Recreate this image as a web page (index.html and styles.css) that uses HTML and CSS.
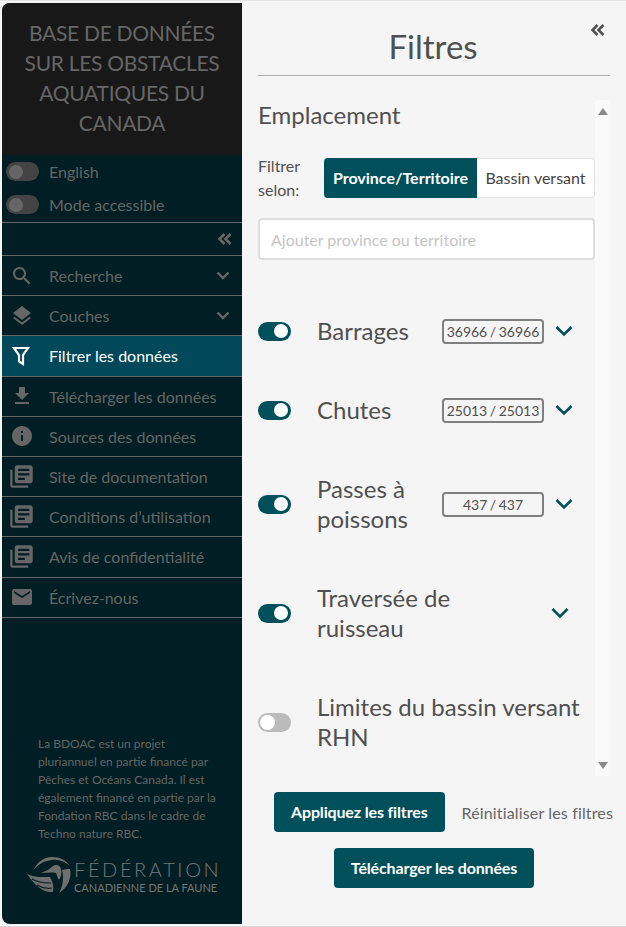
FILE: index.html
```html
<!DOCTYPE html>
<html lang="fr">
<head>
  <meta charset="UTF-8" />
  <meta name="viewport" content="width=device-width, initial-scale=1.0"/>
  <title>Base de données sur les obstacles aquatiques du Canada</title>
  <link rel="stylesheet" href="styles.css">
</head>
<body>
  <aside class="sidebar">
    <h1 class="site-title">Base de données sur les obstacles aquatiques du Canada</h1>

    <div class="switches">
      <div class="switch-row"><span class="toggle toggle-dark"></span>English</div>
      <div class="switch-row"><span class="toggle toggle-dark"></span>Mode accessible</div>
    </div>

    <div class="collapse-row">
      <svg class="double-chevron" viewBox="0 0 14 12"><path d="M6.500 1 1.500 6l5 5M12.500 1l-5 5 5 5"/></svg>
    </div>

    <nav class="nav">
      <a class="nav-item">
        <svg class="nav-icon" viewBox="0 0 24 24"><path d="M15.5 14h-.79l-.28-.27C15.41 12.59 16 11.11 16 9.5 16 5.91 13.09 3 9.5 3S3 5.91 3 9.5 5.91 16 9.5 16c1.61 0 3.09-.59 4.23-1.57l.27.28v.79l5 4.99L20.49 19l-4.99-5zm-6 0C7.01 14 5 11.99 5 9.5S7.01 5 9.5 5 14 7.01 14 9.5 11.99 14 9.5 14z"/></svg>
        <span class="nav-label">Recherche</span>
        <svg class="nav-chevron" viewBox="0 0 14 9"><path d="M1.500 1.500 7 7l5.500-5.500"/></svg>
      </a>
      <a class="nav-item">
        <svg class="nav-icon" viewBox="0 0 24 24"><path d="M11.990 18.540l-7.370-5.730L3 14.070l9 7 9-7-1.630-1.270-7.380 5.740zM12 16l7.360-5.730L21 9l-9-7-9 7 1.630 1.270L12 16z"/></svg>
        <span class="nav-label">Couches</span>
        <svg class="nav-chevron" viewBox="0 0 14 9"><path d="M1.500 1.500 7 7l5.500-5.500"/></svg>
      </a>
      <a class="nav-item nav-item-active">
        <svg class="nav-icon nav-icon-filter" viewBox="0 0 24 24"><path d="M4 4h14l-5 7v9l-4-2.500V11z"/></svg>
        <span class="nav-label">Filtrer les données</span>
      </a>
      <a class="nav-item">
        <svg class="nav-icon" viewBox="0 0 24 24"><path d="M19 9h-4V3H9v6H5l7 7 7-7zM5 18v2h14v-2H5z"/></svg>
        <span class="nav-label">Télécharger les données</span>
      </a>
      <a class="nav-item">
        <svg class="nav-icon" viewBox="0 0 24 24"><path d="M12 2C6.480 2 2 6.480 2 12s4.480 10 10 10 10-4.480 10-10S17.520 2 12 2zm1 15h-2v-6h2v6zm0-8h-2V7h2v2z"/></svg>
        <span class="nav-label">Sources des données</span>
      </a>
      <a class="nav-item">
        <svg class="nav-icon nav-icon-book" viewBox="0 0 24 24"><path d="M4 6H2v14c0 1.100.9 2 2 2h14v-2H4V6zm16-4H8c-1.100 0-2 .9-2 2v12c0 1.100.9 2 2 2h12c1.100 0 2-.9 2-2V4c0-1.100-.9-2-2-2zm-1 9H9V9h10v2zm-4 4H9v-2h6v2zm4-8H9V5h10v2z"/></svg>
        <span class="nav-label">Site de documentation</span>
      </a>
      <a class="nav-item">
        <svg class="nav-icon nav-icon-book" viewBox="0 0 24 24"><path d="M4 6H2v14c0 1.100.9 2 2 2h14v-2H4V6zm16-4H8c-1.100 0-2 .9-2 2v12c0 1.100.9 2 2 2h12c1.100 0 2-.9 2-2V4c0-1.100-.9-2-2-2zm-1 9H9V9h10v2zm-4 4H9v-2h6v2zm4-8H9V5h10v2z"/></svg>
        <span class="nav-label">Conditions d’utilisation</span>
      </a>
      <a class="nav-item">
        <svg class="nav-icon nav-icon-book" viewBox="0 0 24 24"><path d="M4 6H2v14c0 1.100.9 2 2 2h14v-2H4V6zm16-4H8c-1.100 0-2 .9-2 2v12c0 1.100.9 2 2 2h12c1.100 0 2-.9 2-2V4c0-1.100-.9-2-2-2zm-1 9H9V9h10v2zm-4 4H9v-2h6v2zm4-8H9V5h10v2z"/></svg>
        <span class="nav-label">Avis de confidentialité</span>
      </a>
      <a class="nav-item">
        <svg class="nav-icon" viewBox="0 0 24 24"><path d="M20 4H4c-1.100 0-1.990.9-1.990 2L2 18c0 1.100.9 2 2 2h16c1.100 0 2-.9 2-2V6c0-1.100-.9-2-2-2zm0 4l-8 5-8-5V6l8 5 8-5v2z"/></svg>
        <span class="nav-label">Écrivez-nous</span>
      </a>
    </nav>

    <div class="sidebar-footer">
      <p class="credits">La BDOAC est un projet pluriannuel en partie financé par Pêches et Océans Canada. Il est également financé en partie par la Fondation RBC dans le cadre de Techno nature RBC.</p>
      <div class="logo">
        <svg class="logo-mark" viewBox="0 0 47 38">
          <path d="M7 14C11 5 18 0 26 0c8 0 14 3 18 9-6-5-12-7-18-6C17 4 11 8 7 14z"/>
          <path d="M15 16c5-2 9-4 12-7 3-2 7-1 8 3 1 4 0 8-2 11-2-3-2-5-3-7-5-1-10 0-15 0z"/>
          <path d="M36 13c3-1 5-1 8-1 2 8-2 19-11 24 4-7 5-15 3-23z"/>
          <path d="M1 17c8 4 16 3 23 3 3 5 4 10 3 15C18 36 10 30 1 17z"/>
          <path class="logo-cut" d="M6 22c6 4 13 4 19 4M11 28c5 3 10 4 15 3"/>
        </svg>
        <div class="logo-text">
          <div class="logo-name">FÉDÉRATION</div>
          <div class="logo-sub">CANADIENNE DE LA FAUNE</div>
        </div>
      </div>
    </div>
  </aside>

  <main class="panel">
    <header class="panel-head">
      <h2 class="panel-title">Filtres</h2>
      <svg class="double-chevron panel-close" viewBox="0 0 14 12"><path d="M6.500 1 1.500 6l5 5M12.500 1l-5 5 5 5"/></svg>
    </header>

    <div class="scroll-area">
      <div class="scroll-content">
        <h3 class="section-title">Emplacement</h3>
        <div class="filter-by">
          <span class="filter-by-label">Filtrer selon:</span>
          <div class="btn-group">
            <button class="seg seg-on">Province/Territoire</button>
            <button class="seg">Bassin versant</button>
          </div>
        </div>
        <input class="search-input" type="text" placeholder="Ajouter province ou territoire" />

        <div class="layers">
          <div class="layer">
            <span class="toggle toggle-on"></span>
            <span class="layer-name">Barrages</span>
            <span class="count">36966 / 36966</span>
            <svg class="layer-chevron" viewBox="0 0 18 12"><path d="M1.500 2 9 9.500 16.500 2"/></svg>
          </div>
          <div class="layer">
            <span class="toggle toggle-on"></span>
            <span class="layer-name">Chutes</span>
            <span class="count">25013 / 25013</span>
            <svg class="layer-chevron" viewBox="0 0 18 12"><path d="M1.500 2 9 9.500 16.500 2"/></svg>
          </div>
          <div class="layer">
            <span class="toggle toggle-on"></span>
            <span class="layer-name">Passes à poissons</span>
            <span class="count">437 / 437</span>
            <svg class="layer-chevron" viewBox="0 0 18 12"><path d="M1.500 2 9 9.500 16.500 2"/></svg>
          </div>
          <div class="layer layer-wide">
            <span class="toggle toggle-on"></span>
            <span class="layer-name">Traversée de ruisseau</span>
            <svg class="layer-chevron" viewBox="0 0 18 12"><path d="M1.500 2 9 9.500 16.500 2"/></svg>
          </div>
          <div class="layer layer-full">
            <span class="toggle toggle-off"></span>
            <span class="layer-name">Limites du bassin versant RHN</span>
          </div>
        </div>
      </div>
      <div class="scrollbar">
        <span class="arrow-up"></span>
        <span class="arrow-down"></span>
      </div>
    </div>

    <div class="actions">
      <div class="actions-row">
        <button class="btn">Appliquez les filtres</button>
        <a class="reset-link">Réinitialiser les filtres</a>
      </div>
      <button class="btn btn-download">Télécharger les données</button>
    </div>
  </main>
</body>
</html>
```

FILE: styles.css
```css
* {
  margin: 0;
  padding: 0;
  box-sizing: border-box;
}

body {
  width: 626px;
  height: 927px;
  overflow: hidden;
  display: flex;
  padding: 2px 0 2px 2px;
  background-color: #f5f5f5;
  border-top: 1px solid #e4e4e4;
  border-bottom: 1px solid #dcdcdc;
  font-family: Lato, Arial, sans-serif;
  color: #505050;
}

/* left menu */
.sidebar {
  width: 240px;
  flex-shrink: 0;
  display: flex;
  flex-direction: column;
  background-color: #001e23;
  border-radius: 8px 0 0 8px;
  overflow: hidden;
  color: #666;
}

.site-title {
  height: 152px;
  padding: 15px 10px 0;
  background-color: #181818;
  color: #666;
  font-size: 21px;
  font-weight: 400;
  line-height: 30px;
  letter-spacing: -0.3px;
  text-align: center;
  text-transform: uppercase;
}

.switches {
  height: 67px;
}

.switch-row {
  display: flex;
  align-items: center;
  gap: 10px;
  height: 33px;
  padding-left: 4px;
  font-size: 16px;
}

.toggle {
  display: block;
  position: relative;
  width: 33px;
  height: 19px;
  flex-shrink: 0;
  border-radius: 10px;
}

.toggle::after {
  content: "";
  position: absolute;
  top: 2.5px;
  width: 14px;
  height: 14px;
  border-radius: 50%;
}

.toggle-dark {
  background-color: #444;
}

.toggle-dark::after {
  left: 3px;
  background-color: #666;
}

.toggle-on {
  background-color: #00505c;
}

.toggle-on::after {
  right: 3px;
  background-color: #fff;
}

.toggle-off {
  background-color: #bbb;
}

.toggle-off::after {
  left: 2px;
  top: 2px;
  width: 15px;
  height: 15px;
  background-color: #fff;
}

.double-chevron {
  display: block;
  width: 14px;
  height: 12px;
  fill: none;
  stroke: #666;
  stroke-width: 2.6;
}

.collapse-row {
  display: flex;
  align-items: center;
  justify-content: flex-end;
  height: 33px;
  padding-right: 10px;
  border-top: 1px solid #666;
}

.nav-item {
  display: flex;
  align-items: center;
  height: 40.2px;
  padding-left: 8px;
  border-top: 1px solid #666;
  font-size: 16px;
}

.nav-item:last-child {
  height: 41.2px;
  border-bottom: 1px solid #666;
}

.nav-icon {
  width: 24px;
  height: 24px;
  margin-right: 15px;
  flex-shrink: 0;
  fill: #666;
}

.nav-icon-filter {
  fill: none;
  stroke: #fff;
  stroke-width: 2.2;
}

.nav-icon-book {
  width: 27px;
  height: 27px;
  margin-left: -2px;
  margin-right: 14px;
}

.nav-label {
  flex: 1;
}

.nav-chevron {
  width: 14px;
  height: 9px;
  margin-right: 12px;
  fill: none;
  stroke: #666;
  stroke-width: 2.4;
}

.nav-item-active {
  background-color: #00485a;
  color: #fff;
}

.sidebar-footer {
  margin-top: auto;
  padding: 0 0 29px;
}

.credits {
  padding: 0 20px 0 36px;
  font-size: 12px;
  line-height: 18px;
}

.logo {
  display: flex;
  align-items: center;
  gap: 1px;
  margin-top: 14px;
  padding-left: 24px;
}

.logo-mark {
  width: 47px;
  height: 38px;
  flex-shrink: 0;
  fill: #6e6e6e;
}

.logo-cut {
  fill: none;
  stroke: #001e23;
  stroke-width: 1.2;
}

.logo-name {
  font-size: 20px;
  font-weight: 300;
  line-height: 24px;
  letter-spacing: 2.6px;
  color: #777;
}

.logo-sub {
  font-size: 11px;
  line-height: 14px;
  color: #777;
}

/* right panel */
.panel {
  width: 384px;
  flex-shrink: 0;
  padding: 0 16px;
}

.panel-head {
  position: relative;
  height: 73px;
  border-bottom: 1px solid #b0b0b0;
}

.panel-title {
  padding: 22px 2px 0 0;
  font-size: 33px;
  font-weight: 400;
  line-height: 42px;
  text-align: center;
}

.panel-close {
  position: absolute;
  top: 21px;
  right: 5px;
  stroke: #505050;
}

.scroll-area {
  display: flex;
  height: 676px;
  margin-top: 24px;
}

.scroll-content {
  width: 337px;
  overflow: hidden;
}

.section-title {
  font-size: 24px;
  font-weight: 400;
  line-height: 30px;
}

.filter-by {
  display: flex;
  align-items: flex-start;
  margin-top: 28px;
}

.filter-by-label {
  width: 66px;
  margin-top: -4px;
  font-size: 16px;
  line-height: 24px;
}

.btn-group {
  display: flex;
  height: 40px;
  width: 271px;
}

.seg {
  flex: 1;
  padding-bottom: 2px;
  border: 1px solid #e2e2e2;
  border-left: none;
  border-radius: 0 4px 4px 0;
  background-color: #fff;
  color: #444;
  font-family: inherit;
  font-size: 16px;
}

.seg-on {
  flex: none;
  width: 153px;
  border: none;
  border-radius: 4px 0 0 4px;
  background-color: #00505c;
  color: #fff;
  font-weight: 700;
}

.search-input {
  display: block;
  width: 337px;
  height: 42px;
  margin-top: 16px;
  padding: 0 11px;
  border: 2px solid #ddd;
  border-radius: 4px;
  background-color: #fff;
  font-family: inherit;
  font-size: 16px;
}

.search-input::placeholder {
  color: #c4c4c4;
}

.layers {
  display: flex;
  flex-direction: column;
  gap: 49px;
  margin-top: 56px;
}

.layer {
  display: grid;
  grid-template-columns: 33px 151px 102px 29px;
  align-items: center;
}

.layer-name {
  margin-left: 26px;
  font-size: 24px;
  line-height: 30px;
}

.count {
  height: 25px;
  border: 2px solid #808080;
  border-radius: 4px;
  font-size: 14px;
  line-height: 21px;
  text-align: center;
  white-space: nowrap;
  word-spacing: -1px;
}

.layer-chevron {
  width: 18px;
  height: 12px;
  margin-left: 11px;
  fill: none;
  stroke: #00505c;
  stroke-width: 2.6;
}

.layer-wide {
  grid-template-columns: 33px 260px 18px;
}

.layer-wide .layer-name {
  width: 200px;
}

.layer-wide .layer-chevron {
  margin-left: 0;
}

.layer-full {
  grid-template-columns: 33px 1fr;
}

.scrollbar {
  display: flex;
  flex-direction: column;
  justify-content: space-between;
  align-items: center;
  width: 15px;
  padding: 8px 0 7px;
  background-color: #fafafa;
}

.arrow-up,
.arrow-down {
  display: block;
  width: 0;
  height: 0;
  border-left: 5px solid transparent;
  border-right: 5px solid transparent;
}

.arrow-up {
  border-bottom: 7px solid #8a8a8a;
}

.arrow-down {
  border-top: 7px solid #8a8a8a;
}

.actions {
  display: flex;
  flex-direction: column;
  align-items: center;
  gap: 16px;
  margin-top: 16px;
}

.actions-row {
  display: flex;
  align-items: center;
  gap: 17px;
  width: 100%;
  padding-left: 16px;
  white-space: nowrap;
}

.btn {
  height: 40px;
  padding: 0 17px 2px;
  border: none;
  border-radius: 4px;
  background-color: #00505c;
  color: #fff;
  font-family: inherit;
  font-size: 16px;
  font-weight: 700;
  letter-spacing: -0.15px;
  cursor: pointer;
}

.reset-link {
  font-size: 16px;
  letter-spacing: 0.15px;
  color: #666;
}
```
